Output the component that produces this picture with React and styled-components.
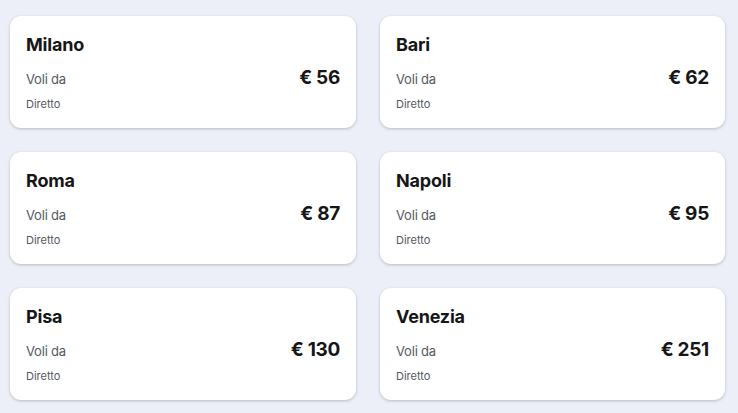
import React from 'react';
import styled, { createGlobalStyle } from 'styled-components';

const GlobalStyle = createGlobalStyle`
  body {
    margin: 0;
    padding: 0;
    background: #eceff7;
    font-family: Inter, 'Noto Sans', sans-serif;
    color: #161616;
  }

  *, *::before, *::after {
    box-sizing: border-box;
  }
`;

const Grid = styled.div`
  display: grid;
  grid-template-columns: 346px 345px;
  column-gap: 24px;
  row-gap: 24px;
  padding: 16px 13px 13px 10px;
`;

const Card = styled.div`
  height: 112px;
  background: #ffffff;
  border-radius: 11px;
  box-shadow: 0 1px 3px rgba(37, 32, 31, 0.25);
  padding: 17px 16px 0 16px;
  display: flex;
  flex-direction: column;
`;

const City = styled.div`
  font-size: 18px;
  line-height: 24px;
  font-weight: 700;
  letter-spacing: -0.2px;
`;

const PriceRow = styled.div`
  display: flex;
  justify-content: space-between;
  align-items: center;
  margin-top: 5px;
  height: 30px;
`;

const Label = styled.span`
  font-size: 13px;
  color: #545860;
  letter-spacing: -0.2px;
  margin-top: 4px;
`;

const Price = styled.span`
  font-size: 19px;
  font-weight: 700;
  letter-spacing: -0.3px;
`;

const Note = styled.div`
  margin-top: 4px;
  font-size: 11px;
  line-height: 16px;
  color: #545860;
`;

const destinations = [
  { city: 'Milano', price: 56 },
  { city: 'Bari', price: 62 },
  { city: 'Roma', price: 87 },
  { city: 'Napoli', price: 95 },
  { city: 'Pisa', price: 130 },
  { city: 'Venezia', price: 251 },
];

const App = () => (
  <>
    <GlobalStyle />
    <Grid>
      {destinations.map((d) => (
        <Card key={d.city}>
          <City>{d.city}</City>
          <PriceRow>
            <Label>Voli da</Label>
            <Price>€ {d.price}</Price>
          </PriceRow>
          <Note>Diretto</Note>
        </Card>
      ))}
    </Grid>
  </>
);

export default App;
